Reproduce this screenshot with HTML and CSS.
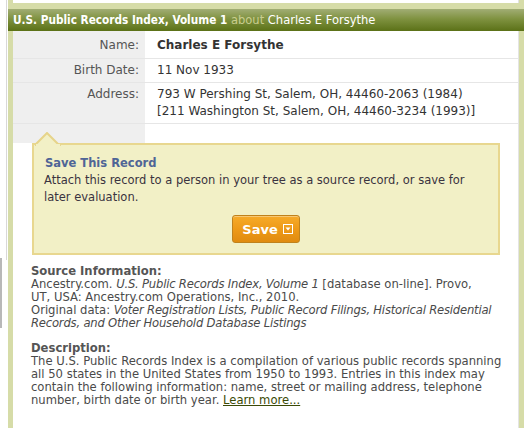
FILE: index.html
```html
<!DOCTYPE html>
<html>
<head>
<meta charset="utf-8">
<link rel="stylesheet" href="styles.css">
</head>
<body>
<div class="page">
  <div class="side">
    <div class="side-line"></div>
    <div class="side-block"></div>
  </div>
  <div class="frame">
    <div class="prev-box"></div>
    <div class="header">
      <span class="h-title">U.S. Public Records Index, Volume 1</span>
      <span class="h-about">about</span>
      <span class="h-name">Charles E Forsythe</span>
    </div>
    <div class="panel">
      <div class="rows">
        <div class="row row-first">
          <div class="label">Name:</div>
          <div class="value value-strong">Charles E Forsythe</div>
        </div>
        <div class="row">
          <div class="label">Birth Date:</div>
          <div class="value">11 Nov 1933</div>
        </div>
        <div class="row">
          <div class="label">Address:</div>
          <div class="value">793 W Pershing St, Salem, OH, 44460-2063 (1984)<br>[211 Washington St, Salem, OH, 44460-3234 (1993)]</div>
        </div>
        <div class="row row-empty">
          <div class="label"></div>
          <div class="value"></div>
        </div>
      </div>
      <div class="callout">
        <svg class="pointer" width="26" height="14" viewBox="0 0 26 14">
          <polygon points="0,13 12,1 24,13" fill="#f2f0c6" stroke="#e6d48a" stroke-width="2"/>
          <rect x="1" y="12" width="24" height="2" fill="#f2f0c6"/>
        </svg>
        <div class="callout-title">Save This Record</div>
        <div class="callout-text">Attach this record to a person in your tree as a source record, or save for later evaluation.</div>
        <div class="callout-actions">
          <button class="save-btn">Save <span class="caret-box"><svg width="10" height="10" viewBox="0 0 10 10"><rect x="0.5" y="0.5" width="9" height="9" fill="none" stroke="#fff" stroke-width="1"/><polygon points="2.5,3.5 7.5,3.5 5,6.5" fill="#fff"/></svg></span></button>
        </div>
      </div>
      <div class="source">
        <div class="src-head">Source Information:</div>
        <div class="src-text">Ancestry.com. <i>U.S. Public Records Index, Volume 1</i> [database on-line]. Provo,<br>UT, USA: Ancestry.com Operations, Inc., 2010.<br>Original data: <i>Voter Registration Lists, Public Record Filings, Historical Residential</i><br><i>Records, and Other Household Database Listings</i></div>
        <div class="src-head src-gap">Description:</div>
        <div class="src-text">The U.S. Public Records Index is a compilation of various public records spanning all 50 states in the United States from 1950 to 1993. Entries in this index may contain the following information: name, street or mailing address, telephone number, birth date or birth year. <a class="learn" href="#">Learn more...</a></div>
      </div>
    </div>
  </div>
</div>
</body>
</html>
```
FILE: styles.css
```css
html, body {
  margin: 0;
  padding: 0;
  background: #ffffff;
}
body {
  font-family: "DejaVu Sans", Verdana, sans-serif;
  color: #333333;
}
.page {
  display: flex;
  width: 529px;
  height: 435px;
  overflow: hidden;
}
.side {
  width: 8px;
  display: flex;
  flex-direction: column;
  position: relative;
}
.side-line {
  position: absolute;
  left: 6px;
  top: 0;
  width: 1px;
  height: 260px;
  background: #d8d8d8;
}
.side-block {
  position: absolute;
  left: 0;
  top: 258px;
  width: 2px;
  height: 70px;
  background: #b8b8b8;
}
.frame {
  width: 516px;
  height: 428px;
  background: #d6dca8;
  display: flex;
  flex-direction: column;
}
.prev-box {
  height: 3px;
  margin: 0 5px 6px 5px;
  background: #ffffff;
  border-right: 1px solid #e2e2e2;
}
.header {
  height: 22px;
  background: linear-gradient(to bottom, #a1ad74 0%, #7f9240 45%, #5b7117 100%);
  padding: 0 5px;
  font-family: "DejaVu Sans Condensed", Tahoma, sans-serif;
  font-size: 12.8px;
  line-height: 22px;
  white-space: nowrap;
  color: #ffffff;
}
.h-title {
  font-weight: bold;
  font-size: 11.7px;
}
.h-about {
  color: #c9cd8f;
}
.panel {
  flex: 1;
  margin: 0 5px;
  background: #ffffff;
  border-right: 1px solid #e4e4e4;
}
.rows {
  display: flex;
  flex-direction: column;
}
.row {
  display: flex;
  font-size: 12px;
  line-height: 17px;
}
.label {
  width: 126px;
  padding: 3px 6px 3px 0;
  text-align: right;
  background: #efefef;
  color: #555555;
  border-bottom: 1px solid #e6e6e6;
}
.value {
  flex: 1;
  padding: 3px 0 3px 12px;
  color: #333333;
  border-bottom: 1px solid #e6e6e6;
}
.row-first .label, .row-first .value {
  padding-top: 6px;
  padding-bottom: 4px;
}
.value-strong {
  font-weight: bold;
}
.row-empty .label, .row-empty .value {
  height: 13px;
  border-bottom: none;
}
.callout {
  position: relative;
  margin: 0 18px 0 19px;
  background: #f2f0c6;
  border: 2px solid #e8d78f;
  padding: 10px 10px 10px 10px;
  font-size: 11.5px;
  line-height: 17px;
}
.pointer {
  position: absolute;
  left: 1px;
  top: -13px;
}
.callout-title {
  font-weight: bold;
  color: #4f6596;
  padding-left: 1px;
}
.callout-text {
  color: #3a3340;
}
.callout-actions {
  display: flex;
  justify-content: center;
  margin-top: 9px;
}
.save-btn {
  height: 28px;
  padding: 0 6px 0 9px;
  border: 1px solid #c0821c;
  border-radius: 3px;
  background: linear-gradient(to bottom, #f6ab2a 0%, #ee9a18 50%, #e08b10 100%);
  color: #ffffff;
  font-family: "DejaVu Sans", Verdana, sans-serif;
  font-weight: bold;
  font-size: 13px;
  display: flex;
  align-items: center;
  gap: 5px;
  box-shadow: inset 0 1px 0 rgba(255,255,255,0.35);
}
.caret-box {
  display: flex;
}
.source {
  padding: 10px 12px 0 18px;
  font-size: 11.6px;
  line-height: 13px;
  color: #4a4a4a;
}
.src-text {
  white-space: normal;
}
.src-text i {
  letter-spacing: -0.2px;
}
.src-head {
  font-weight: bold;
  color: #555555;
}
.src-gap {
  margin-top: 12px;
}
.learn {
  color: #3b4a06;
  text-decoration: underline;
}
```
